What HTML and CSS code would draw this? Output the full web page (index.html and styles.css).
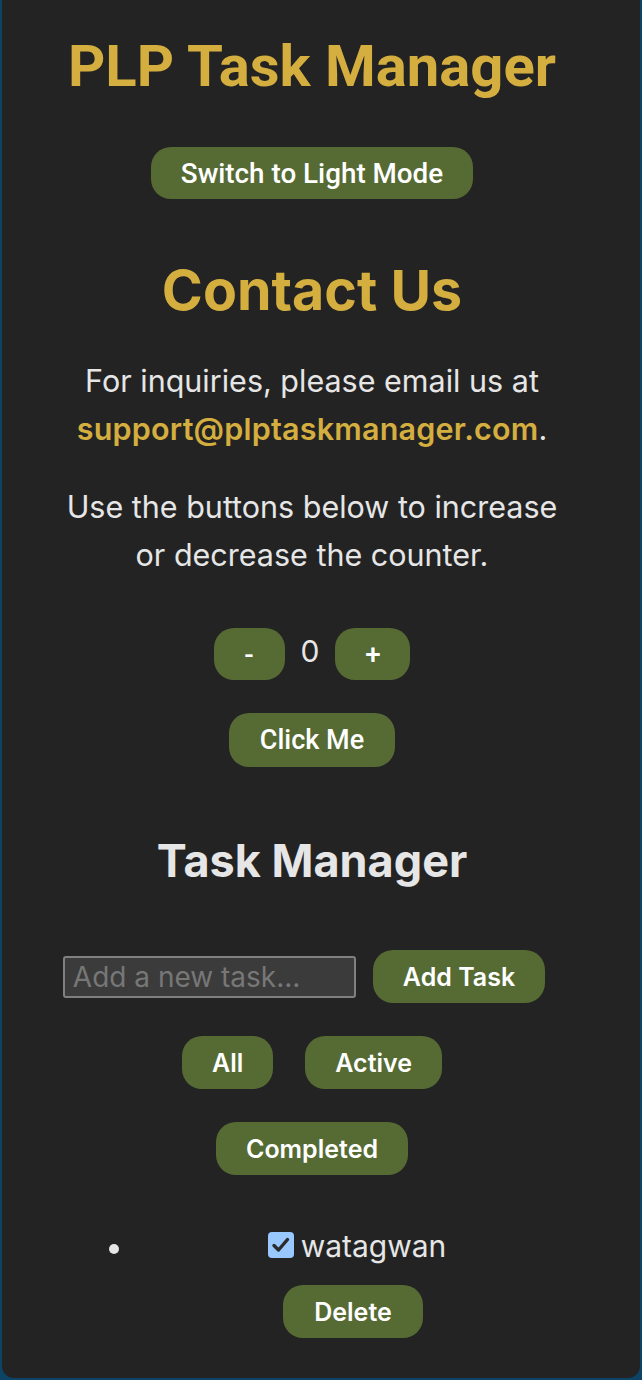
FILE: index.html
```html
<!DOCTYPE html>
<html lang="en">
<head>
<meta charset="utf-8">
<title>PLP Task Manager</title>
<link rel="stylesheet" href="styles.css">
</head>
<body>
<main class="card">
  <h1 class="title">PLP Task Manager</h1>
  <button class="btn btn-mode">Switch to Light Mode</button>
  <h2 class="contact">Contact Us</h2>
  <p class="text text-first">For inquiries, please email us at <a class="mail" href="#">support@plptaskmanager.com</a>.</p>
  <p class="text text-second">Use the buttons below to increase<br>or decrease the counter.</p>
  <div class="counter">
    <button class="btn btn-count">-</button>
    <span class="count">0</span>
    <button class="btn btn-count btn-plus">+</button>
  </div>
  <button class="btn btn-click">Click Me</button>
  <h2 class="tm">Task Manager</h2>
  <div class="add-row">
    <input class="task-input" type="text" placeholder="Add a new task...">
    <button class="btn btn-inter">Add Task</button>
  </div>
  <div class="filters">
    <button class="btn btn-inter">All</button>
    <button class="btn btn-inter">Active</button>
  </div>
  <div class="filters">
    <button class="btn btn-inter">Completed</button>
  </div>
  <ul class="tasks">
    <li class="task">
      <div class="task-body">
        <label class="task-label"><span class="check"><svg viewBox="0 0 26 26" width="26" height="26"><rect x="0" y="0" width="26" height="26" rx="4" fill="#99c8ff"/><path d="M6 13.5 L10.5 18 L19.5 7.5" fill="none" stroke="#2b2b2b" stroke-width="3.4" stroke-linecap="round" stroke-linejoin="round"/></svg></span>watagwan</label>
        <button class="btn btn-inter btn-delete">Delete</button>
      </div>
    </li>
  </ul>
</main>
</body>
</html>
```

FILE: styles.css
```css
html, body {
  margin: 0;
  padding: 0;
}
body {
  background: #0d4466;
  height: 1380px;
  overflow: hidden;
}
.card {
  box-sizing: border-box;
  margin: 0 2px;
  height: 1378px;
  background: #232323;
  border-radius: 0 0 12px 12px;
  display: flex;
  flex-direction: column;
  align-items: center;
  font-family: Inter, "Noto Sans", sans-serif;
  color: #e6e6e6;
  padding: 28px 18px 0 0;
}
.title {
  margin: 0;
  font-family: Roboto, sans-serif;
  font-weight: 700;
  font-size: 58px;
  line-height: 76px;
  color: #d4ae3f;
}
.btn {
  border: none;
  background: #566b33;
  color: #ffffff;
  border-radius: 20px;
  font-family: Roboto, sans-serif;
  font-weight: 500;
  font-size: 27.8px;
  height: 52px;
  padding: 0 24px;
  cursor: pointer;
}
.btn-mode {
  margin-top: 43px;
  width: 322px;
  padding: 0;
}
.contact {
  margin: 56px 0 0;
  font-family: Inter, sans-serif;
  font-weight: 700;
  font-size: 55.5px;
  line-height: 70px;
  color: #d4ae3f;
}
.text {
  font-size: 30.5px;
  line-height: 48px;
  text-align: center;
}
.text-first {
  margin: 32px 0 0;
}
.text-second {
  margin: 30px 0 0;
}
.mail {
  color: #d4ae3f;
  font-weight: 600;
  letter-spacing: 0.2px;
  text-decoration: none;
}
.counter {
  margin-top: 49px;
  display: flex;
  align-items: center;
  gap: 16px;
}
.btn-count {
  width: 71px;
  padding: 0;
}
.btn-plus {
  width: 75px;
}
.count {
  font-size: 30px;
  line-height: 34px;
  margin-top: -6px;
}
.btn-click {
  margin-top: 33px;
  height: 54px;
  width: 166px;
  padding: 0;
  font-size: 27px;
}
.tm {
  margin: 64px 0 0;
  font-weight: 700;
  font-size: 45px;
  line-height: 60px;
  color: #e6e6e6;
}
.add-row {
  margin-top: 59px;
  display: flex;
  align-items: center;
  gap: 17px;
  margin-right: 16px;
}
.task-input {
  box-sizing: border-box;
  width: 293px;
  height: 42px;
  background: #3b3b3b;
  border: 2px solid #808080;
  border-radius: 3px;
  color: #e6e6e6;
  font-family: Inter, sans-serif;
  font-size: 28px;
  padding: 0 8px;
}
.task-input::placeholder {
  color: #777777;
}
.btn-inter {
  font-family: Inter, sans-serif;
  font-weight: 600;
  font-size: 25px;
  height: 53px;
  padding: 0 30px;
}
.filters {
  margin-top: 33px;
  display: flex;
  gap: 32px;
}
.tasks {
  margin: 54px 0 0;
  align-self: stretch;
  padding: 0 43px 0 133px;
}
.task {
  list-style: disc;
  font-size: 30px;
  line-height: 34px;
}
.task::marker {
  color: #e6e6e6;
}
.task-body {
  display: flex;
  flex-direction: column;
  align-items: center;
}
.task-label {
  display: flex;
  align-items: center;
  gap: 7px;
}
.check {
  display: flex;
  margin-top: -2px;
}
.btn-delete {
  margin-top: 22px;
  margin-right: 8px;
  width: 140px;
  padding: 0;
}
```
